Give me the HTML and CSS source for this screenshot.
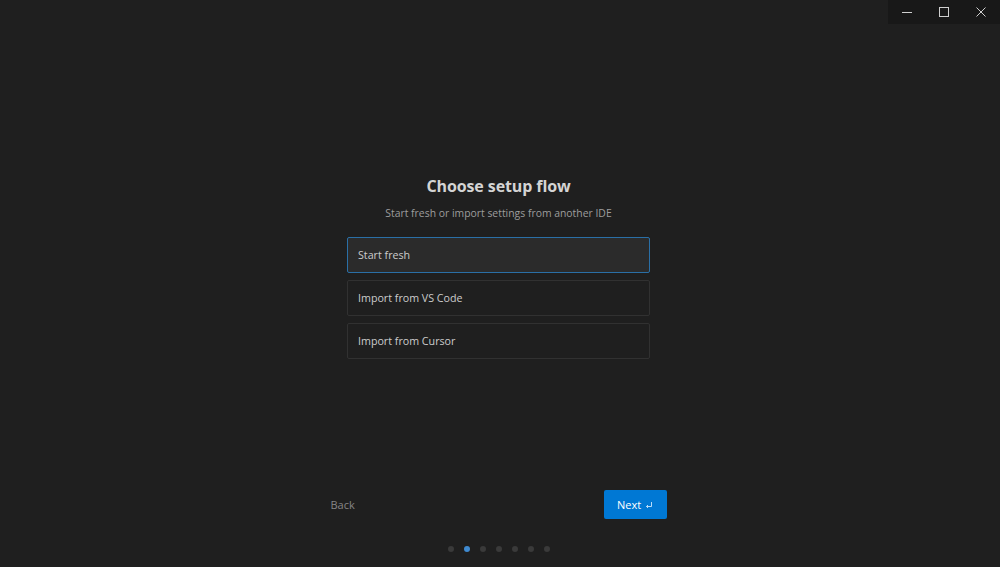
FILE: index.html
```html
<!DOCTYPE html>
<html lang="en">
<head>
<meta charset="utf-8">
<title>Choose setup flow</title>
<link rel="stylesheet" href="styles.css">
</head>
<body>
<div class="window-controls">
  <span class="wc">
    <svg width="12" height="12" viewBox="0 0 12 12"><path d="M1 6.5h10" stroke="#cfcfcf" stroke-width="1"/></svg>
  </span>
  <span class="wc">
    <svg width="12" height="12" viewBox="0 0 12 12"><rect x="1.5" y="1.5" width="9" height="9" fill="none" stroke="#cfcfcf" stroke-width="1"/></svg>
  </span>
  <span class="wc">
    <svg width="12" height="12" viewBox="0 0 12 12"><path d="M1.5 1.5l9 9M10.5 1.5l-9 9" stroke="#cfcfcf" stroke-width="1"/></svg>
  </span>
</div>
<main class="page">
  <section class="content">
    <h1 class="title">Choose setup flow</h1>
    <p class="subtitle">Start fresh or import settings from another IDE</p>
    <div class="options">
      <div class="option selected">Start fresh</div>
      <div class="option">Import from VS Code</div>
      <div class="option">Import from Cursor</div>
    </div>
  </section>
  <div class="spacer"></div>
  <div class="footer">
    <span class="back">Back</span>
    <button class="next">Next
      <svg class="enter" width="8" height="8" viewBox="0 0 8 8"><path d="M6.5 1v4.5H1.5M3 4l-1.5 1.5L3 7" fill="none" stroke="#cfe6fb" stroke-width="0.9"/></svg>
    </button>
  </div>
  <div class="dots">
    <span class="dot"></span>
    <span class="dot active"></span>
    <span class="dot"></span>
    <span class="dot"></span>
    <span class="dot"></span>
    <span class="dot"></span>
    <span class="dot"></span>
  </div>
</main>
</body>
</html>
```
FILE: styles.css
```css
html, body {
  margin: 0;
  padding: 0;
  height: 100%;
}
body {
  background: #1f1f1f;
  font-family: "Open Sans", "Noto Sans", sans-serif;
  color: #cccccc;
  overflow: hidden;
}
.window-controls {
  position: absolute;
  top: 0;
  right: 0;
  width: 112px;
  height: 24px;
  background: #181818;
  display: flex;
  align-items: center;
  justify-content: space-around;
}
.wc {
  display: flex;
  width: 37px;
  height: 24px;
  align-items: center;
  justify-content: center;
}
.page {
  box-sizing: border-box;
  height: 567px;
  padding-right: 3px;
  display: flex;
  flex-direction: column;
  align-items: center;
}
.content {
  margin-top: 174px;
  width: 303px;
  display: flex;
  flex-direction: column;
  align-items: center;
}
.title {
  margin: 0;
  font-size: 16px;
  line-height: 24px;
  font-weight: 700;
  color: #d4d4d4;
  letter-spacing: -0.1px;
}
.subtitle {
  margin: 7px 0 0;
  font-size: 10.4px;
  line-height: 16px;
  color: #9d9d9d;
}
.options {
  margin-top: 16px;
  width: 100%;
  display: flex;
  flex-direction: column;
  gap: 7px;
}
.option {
  box-sizing: border-box;
  height: 36px;
  border: 1px solid #313131;
  border-radius: 2px;
  background: #1f1f1f;
  padding: 0 10px;
  display: flex;
  align-items: center;
  font-size: 10.7px;
  color: #cccccc;
}
.option.selected {
  background: #2b2b2b;
  border-color: #2a6fa6;
}
.spacer {
  flex: 1;
}
.footer {
  width: 336px;
  height: 29px;
  display: flex;
  align-items: center;
  justify-content: space-between;
}
.back {
  font-size: 11px;
  color: #858585;
}
.next {
  box-sizing: border-box;
  height: 29px;
  width: 63px;
  border: none;
  border-radius: 2px;
  background: #0078d4;
  color: #ffffff;
  font-family: inherit;
  font-size: 11px;
  display: flex;
  align-items: center;
  justify-content: center;
  gap: 4px;
  padding: 0;
}
.dots {
  margin-top: 27px;
  margin-bottom: 15px;
  display: flex;
  gap: 10px;
}
.dot {
  width: 6px;
  height: 6px;
  border-radius: 50%;
  background: #3a3a3a;
}
.dot.active {
  background: #3f8ad0;
}
```
